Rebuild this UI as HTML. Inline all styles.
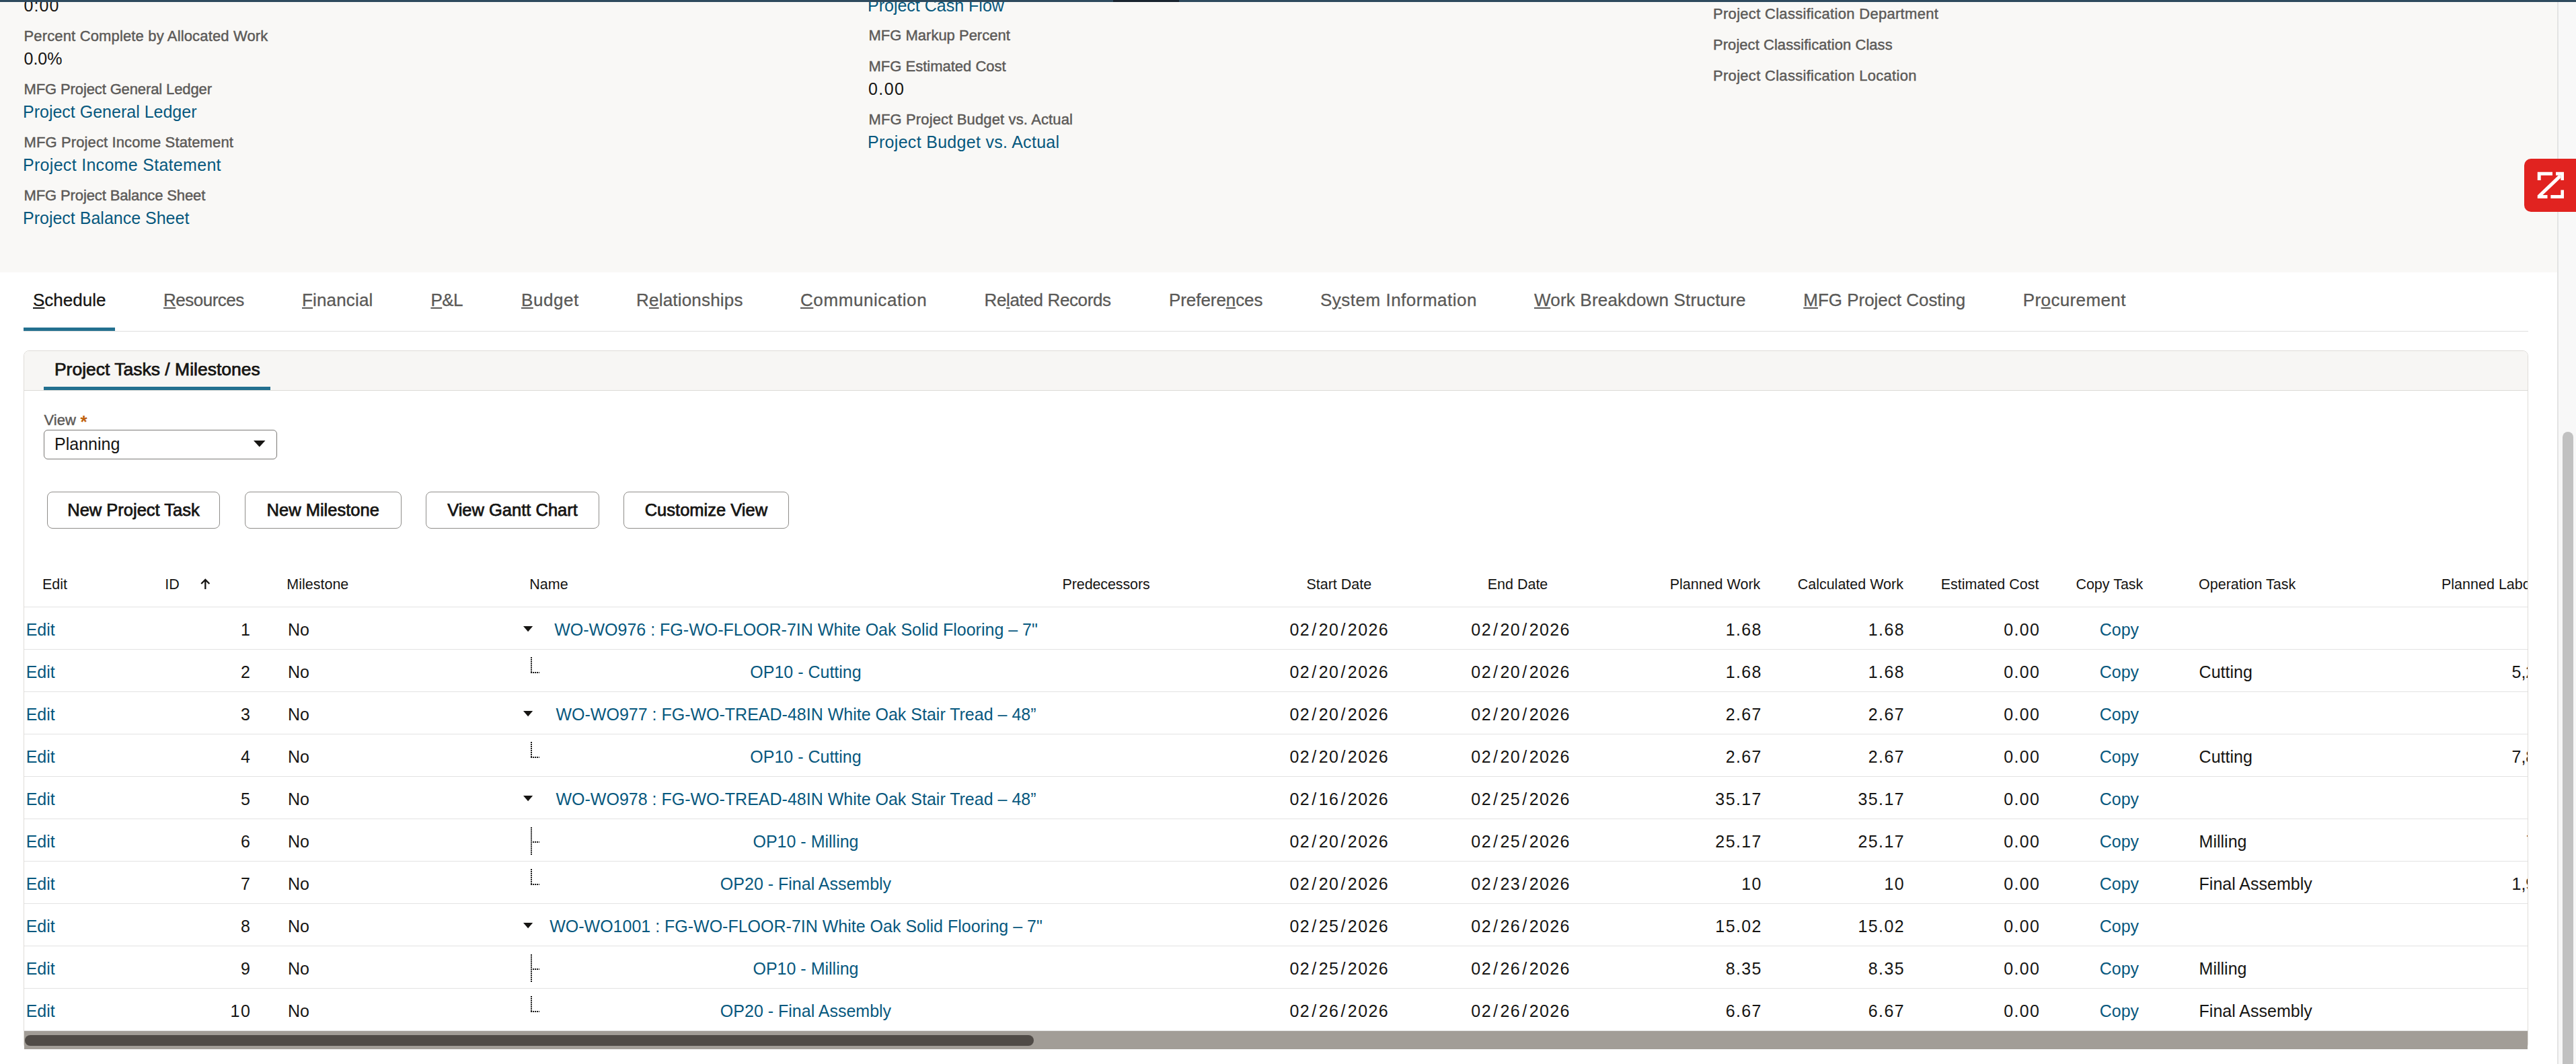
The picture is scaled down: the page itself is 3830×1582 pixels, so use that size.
<!DOCTYPE html><html><head><meta charset='utf-8'><style>
html,body{margin:0;padding:0;}
body{width:3830px;height:1582px;overflow:hidden;position:relative;background:#fff;font-family:"Liberation Sans",sans-serif;}
.t{position:absolute;white-space:nowrap;}
.r{position:absolute;}
.ab{position:absolute;}
.num{letter-spacing:1.4px;}
.sl{margin:0 2.1px;}
.sb{-webkit-text-stroke:0.45px currentColor;}
.sbt{-webkit-text-stroke:0.3px currentColor;}
.sb2{-webkit-text-stroke:0.75px currentColor;}
u{text-decoration:underline;text-decoration-thickness:2px;text-underline-offset:2px;}
.card{position:absolute;left:35px;top:521px;width:3722px;height:1037px;border:1px solid #dfdcd8;border-radius:8px;}
.sel{position:absolute;left:65.4px;top:638.5px;width:347px;height:44px;box-sizing:border-box;border:1.5px solid #7b7976;border-radius:6px;background:#fff;}
.btn{position:absolute;top:730.5px;height:55.2px;border:1.2px solid #8f8d8a;border-radius:8px;background:#fff;box-sizing:border-box;}
.dv{position:absolute;width:2px;background:repeating-linear-gradient(to bottom,#1a1a1a 0 1.6px,transparent 1.6px 3px);}
.dh{position:absolute;height:2px;background:repeating-linear-gradient(to right,#1a1a1a 0 1.6px,transparent 1.6px 3px);}

</style></head><body><div class='r' style='left:0px;top:0px;width:3802px;height:405px;background:#f9f8f6;'></div>
<div class='t num' style='top:-3.8px;font-size:25px;line-height:25px;color:#161513;left:35.5px;letter-spacing:1.1px'>0:00</div>
<div class='t sb' style='top:42.5px;font-size:22px;line-height:22px;color:#5c5a58;left:35.5px;letter-spacing:0.15px'>Percent Complete by Allocated Work</div>
<div class='t' style='top:74.5px;font-size:25px;line-height:25px;color:#161513;left:35.5px;'>0.0%</div>
<div class='t sb' style='top:121.5px;font-size:22px;line-height:22px;color:#5c5a58;left:35.5px;letter-spacing:-0.12px'>MFG Project General Ledger</div>
<div class='t' style='top:154.0px;font-size:25px;line-height:25px;color:#07587e;left:34.0px;'>Project General Ledger</div>
<div class='t sb' style='top:200.5px;font-size:22px;line-height:22px;color:#5c5a58;left:35.5px;letter-spacing:0.12px'>MFG Project Income Statement</div>
<div class='t' style='top:232.5px;font-size:25px;line-height:25px;color:#07587e;left:34.0px;letter-spacing:0.3px'>Project Income Statement</div>
<div class='t sb' style='top:279.5px;font-size:22px;line-height:22px;color:#5c5a58;left:35.5px;letter-spacing:-0.12px'>MFG Project Balance Sheet</div>
<div class='t' style='top:311.5px;font-size:25px;line-height:25px;color:#07587e;left:34.0px;'>Project Balance Sheet</div>
<div class='t' style='top:-4.5px;font-size:25px;line-height:25px;color:#07587e;left:1290.0px;'>Project Cash Flow</div>
<div class='t sb' style='top:42.0px;font-size:22px;line-height:22px;color:#5c5a58;left:1291.5px;'>MFG Markup Percent</div>
<div class='t sb' style='top:87.5px;font-size:22px;line-height:22px;color:#5c5a58;left:1291.5px;'>MFG Estimated Cost</div>
<div class='t num' style='top:119.5px;font-size:25px;line-height:25px;color:#161513;left:1291.0px;'>0.00</div>
<div class='t sb' style='top:166.5px;font-size:22px;line-height:22px;color:#5c5a58;left:1291.5px;letter-spacing:0.14px'>MFG Project Budget vs. Actual</div>
<div class='t' style='top:198.5px;font-size:25px;line-height:25px;color:#07587e;left:1290.0px;letter-spacing:0.3px'>Project Budget vs. Actual</div>
<div class='t sb' style='top:10.0px;font-size:22px;line-height:22px;color:#5c5a58;left:2547.0px;letter-spacing:0.3px'>Project Classification Department</div>
<div class='t sb' style='top:56.0px;font-size:22px;line-height:22px;color:#5c5a58;left:2547.0px;letter-spacing:0.05px'>Project Classification Class</div>
<div class='t sb' style='top:102.0px;font-size:22px;line-height:22px;color:#5c5a58;left:2547.0px;letter-spacing:0.3px'>Project Classification Location</div>
<div class='t sbt' style='top:432.5px;font-size:26px;line-height:26px;color:#161513;left:49.0px;letter-spacing:0px'><u>S</u>chedule</div>
<div class='t sbt' style='top:432.5px;font-size:26px;line-height:26px;color:#5a5957;left:243.0px;letter-spacing:-0.5px'><u>R</u>esources</div>
<div class='t sbt' style='top:432.5px;font-size:26px;line-height:26px;color:#5a5957;left:449.0px;letter-spacing:0.15px'><u>F</u>inancial</div>
<div class='t sbt' style='top:432.5px;font-size:26px;line-height:26px;color:#5a5957;left:640.4px;letter-spacing:-0.55px'><u>P</u>&amp;L</div>
<div class='t sbt' style='top:432.5px;font-size:26px;line-height:26px;color:#5a5957;left:775.0px;letter-spacing:0.54px'><u>B</u>udget</div>
<div class='t sbt' style='top:432.5px;font-size:26px;line-height:26px;color:#5a5957;left:946.0px;letter-spacing:0.2px'>R<u>e</u>lationships</div>
<div class='t sbt' style='top:432.5px;font-size:26px;line-height:26px;color:#5a5957;left:1190.0px;letter-spacing:0.58px'><u>C</u>ommunication</div>
<div class='t sbt' style='top:432.5px;font-size:26px;line-height:26px;color:#5a5957;left:1463.6px;letter-spacing:-0.37px'>Re<u>l</u>ated Records</div>
<div class='t sbt' style='top:432.5px;font-size:26px;line-height:26px;color:#5a5957;left:1738.0px;letter-spacing:-0.07px'>Prefere<u>n</u>ces</div>
<div class='t sbt' style='top:432.5px;font-size:26px;line-height:26px;color:#5a5957;left:1963.0px;letter-spacing:0.5px'>S<u>y</u>stem Information</div>
<div class='t sbt' style='top:432.5px;font-size:26px;line-height:26px;color:#5a5957;left:2281.0px;letter-spacing:0.19px'><u>W</u>ork Breakdown Structure</div>
<div class='t sbt' style='top:432.5px;font-size:26px;line-height:26px;color:#5a5957;left:2681.3px;letter-spacing:-0.02px'><u>M</u>FG Project Costing</div>
<div class='t sbt' style='top:432.5px;font-size:26px;line-height:26px;color:#5a5957;left:3007.8px;letter-spacing:0.37px'>Pr<u>o</u>curement</div>
<div class='r' style='left:35px;top:487px;width:136px;height:5px;background:#23708f;'></div>
<div class='r' style='left:35px;top:492px;width:3724px;height:1px;background:#dfdfdf;'></div>
<div class='card'></div>
<div class='r' style='left:36px;top:522px;width:3722px;height:58px;background:#f7f6f4;border-radius:7px 7px 0 0'></div>
<div class='r' style='left:36px;top:580px;width:3722px;height:1px;background:#dcdad6;'></div>
<div class='t sb2' style='top:536.0px;font-size:26.5px;line-height:26.5px;color:#161513;left:80.9px;'>Project Tasks / Milestones</div>
<div class='r' style='left:65px;top:575px;width:337px;height:5px;background:#23708f;'></div>
<div class='t sb' style='top:614.0px;font-size:22px;line-height:22px;color:#5c5a58;left:65.6px;'>View</div>
<div class='t' style='top:614.0px;font-size:26px;line-height:26px;color:#c0620e;font-weight:700;left:119.5px;'>*</div>
<div class='sel'></div>
<div class='t' style='top:648.0px;font-size:25px;line-height:25px;color:#161513;left:81.0px;'>Planning</div>
<svg class='ab' style='left:377px;top:655px' width='18' height='10'><path d='M0 0H17.5L8.75 9.5Z' fill='#161513'/></svg>
<div class='btn' style='left:69.6px;width:257.9px'></div>
<div class='t sb2' style='top:746.0px;font-size:25.5px;line-height:25.5px;color:#161513;left:-801.5px;width:2000px;text-align:center;'>New Project Task</div>
<div class='btn' style='left:364px;width:232.5px'></div>
<div class='t sb2' style='top:746.0px;font-size:25.5px;line-height:25.5px;color:#161513;left:-519.8px;width:2000px;text-align:center;'>New Milestone</div>
<div class='btn' style='left:633.3px;width:257.4000000000001px'></div>
<div class='t sb2' style='top:746.0px;font-size:25.5px;line-height:25.5px;color:#161513;left:-238.0px;width:2000px;text-align:center;'>View Gantt Chart</div>
<div class='btn' style='left:927.3px;width:245.29999999999995px'></div>
<div class='t sb2' style='top:746.0px;font-size:25.5px;line-height:25.5px;color:#161513;left:49.9px;width:2000px;text-align:center;'>Customize View</div>
<div class='t' style='top:858.5px;font-size:21.5px;line-height:21.5px;color:#161513;left:63.0px;'>Edit</div>
<div class='t' style='top:858.5px;font-size:21.5px;line-height:21.5px;color:#161513;left:245.3px;'>ID</div>
<svg class='ab' style='left:298px;top:860px' width='15' height='17'><path d='M7.3 1.5V16M1.2 8L7.3 1.9L13.4 8' stroke='#161513' stroke-width='2.3' fill='none'/></svg>
<div class='t' style='top:858.5px;font-size:21.5px;line-height:21.5px;color:#161513;left:426.3px;'>Milestone</div>
<div class='t' style='top:858.5px;font-size:21.5px;line-height:21.5px;color:#161513;left:787.3px;'>Name</div>
<div class='t' style='top:858.5px;font-size:21.5px;line-height:21.5px;color:#161513;left:1579.6px;letter-spacing:-0.12px'>Predecessors</div>
<div class='t' style='top:858.5px;font-size:21.5px;line-height:21.5px;color:#161513;left:990.8px;width:2000px;text-align:center;'>Start Date</div>
<div class='t' style='top:858.5px;font-size:21.5px;line-height:21.5px;color:#161513;left:1256.5px;width:2000px;text-align:center;'>End Date</div>
<div class='t' style='top:858.5px;font-size:21.5px;line-height:21.5px;color:#161513;left:1617.3px;width:1000px;text-align:right;'>Planned Work</div>
<div class='t' style='top:858.5px;font-size:21.5px;line-height:21.5px;color:#161513;left:1830.0px;width:1000px;text-align:right;'>Calculated Work</div>
<div class='t' style='top:858.5px;font-size:21.5px;line-height:21.5px;color:#161513;left:2031.5px;width:1000px;text-align:right;'>Estimated Cost</div>
<div class='t' style='top:858.5px;font-size:21.5px;line-height:21.5px;color:#161513;left:2136.4px;width:2000px;text-align:center;'>Copy Task</div>
<div class='t' style='top:858.5px;font-size:21.5px;line-height:21.5px;color:#161513;left:3269.0px;'>Operation Task</div>
<div class='r' style='left:36px;top:902px;width:3722px;height:1px;background:#e3e3e3;'></div>
<div class='r' style='left:36px;top:965px;width:3722px;height:1px;background:#e3e3e3;'></div>
<div class='t' style='top:924.2px;font-size:25px;line-height:25px;color:#07587e;left:38.7px;'>Edit</div>
<div class='t num' style='top:924.2px;font-size:25px;line-height:25px;color:#161513;left:-626.8px;width:1000px;text-align:right;'>1</div>
<div class='t' style='top:924.2px;font-size:25px;line-height:25px;color:#161513;left:428.0px;'>No</div>
<svg class='ab' style='left:778px;top:931.3px' width='15' height='9'><path d='M0 0H14.2L7.1 8.3Z' fill='#161513'/></svg>
<div class='t' style='top:924.2px;font-size:25px;line-height:25px;color:#07587e;left:183.5px;width:2000px;text-align:center;'>WO-WO976 : FG-WO-FLOOR-7IN White Oak Solid Flooring – 7&quot;</div>
<div class='t num' style='top:924.2px;font-size:25px;line-height:25px;color:#161513;left:991.3px;width:2000px;text-align:center;'>02<span class='sl'>/</span>20<span class='sl'>/</span>2026</div>
<div class='t num' style='top:924.2px;font-size:25px;line-height:25px;color:#161513;left:1261.1px;width:2000px;text-align:center;'>02<span class='sl'>/</span>20<span class='sl'>/</span>2026</div>
<div class='t num' style='top:924.2px;font-size:25px;line-height:25px;color:#161513;left:1619.9px;width:1000px;text-align:right;'>1.68</div>
<div class='t num' style='top:924.2px;font-size:25px;line-height:25px;color:#161513;left:1832.0px;width:1000px;text-align:right;'>1.68</div>
<div class='t num' style='top:924.2px;font-size:25px;line-height:25px;color:#161513;left:2033.4px;width:1000px;text-align:right;'>0.00</div>
<div class='t' style='top:924.2px;font-size:25px;line-height:25px;color:#07587e;left:2150.9px;width:2000px;text-align:center;'>Copy</div>
<div class='r' style='left:36px;top:1028px;width:3722px;height:1px;background:#e3e3e3;'></div>
<div class='t' style='top:987.1px;font-size:25px;line-height:25px;color:#07587e;left:38.7px;'>Edit</div>
<div class='t num' style='top:987.1px;font-size:25px;line-height:25px;color:#161513;left:-626.8px;width:1000px;text-align:right;'>2</div>
<div class='t' style='top:987.1px;font-size:25px;line-height:25px;color:#161513;left:428.0px;'>No</div>
<div class='dv' style='left:788.5px;top:977px;height:23px'></div><div class='dh' style='left:789px;top:998.5px;width:12.5px'></div>
<div class='t' style='top:987.1px;font-size:25px;line-height:25px;color:#07587e;left:198.0px;width:2000px;text-align:center;'>OP10 - Cutting</div>
<div class='t num' style='top:987.1px;font-size:25px;line-height:25px;color:#161513;left:991.3px;width:2000px;text-align:center;'>02<span class='sl'>/</span>20<span class='sl'>/</span>2026</div>
<div class='t num' style='top:987.1px;font-size:25px;line-height:25px;color:#161513;left:1261.1px;width:2000px;text-align:center;'>02<span class='sl'>/</span>20<span class='sl'>/</span>2026</div>
<div class='t num' style='top:987.1px;font-size:25px;line-height:25px;color:#161513;left:1619.9px;width:1000px;text-align:right;'>1.68</div>
<div class='t num' style='top:987.1px;font-size:25px;line-height:25px;color:#161513;left:1832.0px;width:1000px;text-align:right;'>1.68</div>
<div class='t num' style='top:987.1px;font-size:25px;line-height:25px;color:#161513;left:2033.4px;width:1000px;text-align:right;'>0.00</div>
<div class='t' style='top:987.1px;font-size:25px;line-height:25px;color:#07587e;left:2150.9px;width:2000px;text-align:center;'>Copy</div>
<div class='t' style='top:987.1px;font-size:25px;line-height:25px;color:#161513;left:3269.6px;'>Cutting</div>
<div class='r' style='left:36px;top:1091px;width:3722px;height:1px;background:#e3e3e3;'></div>
<div class='t' style='top:1050.1px;font-size:25px;line-height:25px;color:#07587e;left:38.7px;'>Edit</div>
<div class='t num' style='top:1050.1px;font-size:25px;line-height:25px;color:#161513;left:-626.8px;width:1000px;text-align:right;'>3</div>
<div class='t' style='top:1050.1px;font-size:25px;line-height:25px;color:#161513;left:428.0px;'>No</div>
<svg class='ab' style='left:778px;top:1057.3px' width='15' height='9'><path d='M0 0H14.2L7.1 8.3Z' fill='#161513'/></svg>
<div class='t' style='top:1050.1px;font-size:25px;line-height:25px;color:#07587e;left:183.5px;width:2000px;text-align:center;'>WO-WO977 : FG-WO-TREAD-48IN White Oak Stair Tread – 48”</div>
<div class='t num' style='top:1050.1px;font-size:25px;line-height:25px;color:#161513;left:991.3px;width:2000px;text-align:center;'>02<span class='sl'>/</span>20<span class='sl'>/</span>2026</div>
<div class='t num' style='top:1050.1px;font-size:25px;line-height:25px;color:#161513;left:1261.1px;width:2000px;text-align:center;'>02<span class='sl'>/</span>20<span class='sl'>/</span>2026</div>
<div class='t num' style='top:1050.1px;font-size:25px;line-height:25px;color:#161513;left:1619.9px;width:1000px;text-align:right;'>2.67</div>
<div class='t num' style='top:1050.1px;font-size:25px;line-height:25px;color:#161513;left:1832.0px;width:1000px;text-align:right;'>2.67</div>
<div class='t num' style='top:1050.1px;font-size:25px;line-height:25px;color:#161513;left:2033.4px;width:1000px;text-align:right;'>0.00</div>
<div class='t' style='top:1050.1px;font-size:25px;line-height:25px;color:#07587e;left:2150.9px;width:2000px;text-align:center;'>Copy</div>
<div class='r' style='left:36px;top:1154px;width:3722px;height:1px;background:#e3e3e3;'></div>
<div class='t' style='top:1113.0px;font-size:25px;line-height:25px;color:#07587e;left:38.7px;'>Edit</div>
<div class='t num' style='top:1113.0px;font-size:25px;line-height:25px;color:#161513;left:-626.8px;width:1000px;text-align:right;'>4</div>
<div class='t' style='top:1113.0px;font-size:25px;line-height:25px;color:#161513;left:428.0px;'>No</div>
<div class='dv' style='left:788.5px;top:1103px;height:23px'></div><div class='dh' style='left:789px;top:1124.5px;width:12.5px'></div>
<div class='t' style='top:1113.0px;font-size:25px;line-height:25px;color:#07587e;left:198.0px;width:2000px;text-align:center;'>OP10 - Cutting</div>
<div class='t num' style='top:1113.0px;font-size:25px;line-height:25px;color:#161513;left:991.3px;width:2000px;text-align:center;'>02<span class='sl'>/</span>20<span class='sl'>/</span>2026</div>
<div class='t num' style='top:1113.0px;font-size:25px;line-height:25px;color:#161513;left:1261.1px;width:2000px;text-align:center;'>02<span class='sl'>/</span>20<span class='sl'>/</span>2026</div>
<div class='t num' style='top:1113.0px;font-size:25px;line-height:25px;color:#161513;left:1619.9px;width:1000px;text-align:right;'>2.67</div>
<div class='t num' style='top:1113.0px;font-size:25px;line-height:25px;color:#161513;left:1832.0px;width:1000px;text-align:right;'>2.67</div>
<div class='t num' style='top:1113.0px;font-size:25px;line-height:25px;color:#161513;left:2033.4px;width:1000px;text-align:right;'>0.00</div>
<div class='t' style='top:1113.0px;font-size:25px;line-height:25px;color:#07587e;left:2150.9px;width:2000px;text-align:center;'>Copy</div>
<div class='t' style='top:1113.0px;font-size:25px;line-height:25px;color:#161513;left:3269.6px;'>Cutting</div>
<div class='r' style='left:36px;top:1217px;width:3722px;height:1px;background:#e3e3e3;'></div>
<div class='t' style='top:1175.9px;font-size:25px;line-height:25px;color:#07587e;left:38.7px;'>Edit</div>
<div class='t num' style='top:1175.9px;font-size:25px;line-height:25px;color:#161513;left:-626.8px;width:1000px;text-align:right;'>5</div>
<div class='t' style='top:1175.9px;font-size:25px;line-height:25px;color:#161513;left:428.0px;'>No</div>
<svg class='ab' style='left:778px;top:1183.3px' width='15' height='9'><path d='M0 0H14.2L7.1 8.3Z' fill='#161513'/></svg>
<div class='t' style='top:1175.9px;font-size:25px;line-height:25px;color:#07587e;left:183.5px;width:2000px;text-align:center;'>WO-WO978 : FG-WO-TREAD-48IN White Oak Stair Tread – 48”</div>
<div class='t num' style='top:1175.9px;font-size:25px;line-height:25px;color:#161513;left:991.3px;width:2000px;text-align:center;'>02<span class='sl'>/</span>16<span class='sl'>/</span>2026</div>
<div class='t num' style='top:1175.9px;font-size:25px;line-height:25px;color:#161513;left:1261.1px;width:2000px;text-align:center;'>02<span class='sl'>/</span>25<span class='sl'>/</span>2026</div>
<div class='t num' style='top:1175.9px;font-size:25px;line-height:25px;color:#161513;left:1619.9px;width:1000px;text-align:right;'>35.17</div>
<div class='t num' style='top:1175.9px;font-size:25px;line-height:25px;color:#161513;left:1832.0px;width:1000px;text-align:right;'>35.17</div>
<div class='t num' style='top:1175.9px;font-size:25px;line-height:25px;color:#161513;left:2033.4px;width:1000px;text-align:right;'>0.00</div>
<div class='t' style='top:1175.9px;font-size:25px;line-height:25px;color:#07587e;left:2150.9px;width:2000px;text-align:center;'>Copy</div>
<div class='r' style='left:36px;top:1280px;width:3722px;height:1px;background:#e3e3e3;'></div>
<div class='t' style='top:1238.8px;font-size:25px;line-height:25px;color:#07587e;left:38.7px;'>Edit</div>
<div class='t num' style='top:1238.8px;font-size:25px;line-height:25px;color:#161513;left:-626.8px;width:1000px;text-align:right;'>6</div>
<div class='t' style='top:1238.8px;font-size:25px;line-height:25px;color:#161513;left:428.0px;'>No</div>
<div class='dv' style='left:788.5px;top:1230px;height:42px'></div><div class='dh' style='left:789px;top:1250.5px;width:12.5px'></div>
<div class='t' style='top:1238.8px;font-size:25px;line-height:25px;color:#07587e;left:198.0px;width:2000px;text-align:center;'>OP10 - Milling</div>
<div class='t num' style='top:1238.8px;font-size:25px;line-height:25px;color:#161513;left:991.3px;width:2000px;text-align:center;'>02<span class='sl'>/</span>20<span class='sl'>/</span>2026</div>
<div class='t num' style='top:1238.8px;font-size:25px;line-height:25px;color:#161513;left:1261.1px;width:2000px;text-align:center;'>02<span class='sl'>/</span>25<span class='sl'>/</span>2026</div>
<div class='t num' style='top:1238.8px;font-size:25px;line-height:25px;color:#161513;left:1619.9px;width:1000px;text-align:right;'>25.17</div>
<div class='t num' style='top:1238.8px;font-size:25px;line-height:25px;color:#161513;left:1832.0px;width:1000px;text-align:right;'>25.17</div>
<div class='t num' style='top:1238.8px;font-size:25px;line-height:25px;color:#161513;left:2033.4px;width:1000px;text-align:right;'>0.00</div>
<div class='t' style='top:1238.8px;font-size:25px;line-height:25px;color:#07587e;left:2150.9px;width:2000px;text-align:center;'>Copy</div>
<div class='t' style='top:1238.8px;font-size:25px;line-height:25px;color:#161513;left:3269.6px;'>Milling</div>
<div class='r' style='left:36px;top:1343px;width:3722px;height:1px;background:#e3e3e3;'></div>
<div class='t' style='top:1301.8px;font-size:25px;line-height:25px;color:#07587e;left:38.7px;'>Edit</div>
<div class='t num' style='top:1301.8px;font-size:25px;line-height:25px;color:#161513;left:-626.8px;width:1000px;text-align:right;'>7</div>
<div class='t' style='top:1301.8px;font-size:25px;line-height:25px;color:#161513;left:428.0px;'>No</div>
<div class='dv' style='left:788.5px;top:1292px;height:23px'></div><div class='dh' style='left:789px;top:1313.5px;width:12.5px'></div>
<div class='t' style='top:1301.8px;font-size:25px;line-height:25px;color:#07587e;left:198.0px;width:2000px;text-align:center;'>OP20 - Final Assembly</div>
<div class='t num' style='top:1301.8px;font-size:25px;line-height:25px;color:#161513;left:991.3px;width:2000px;text-align:center;'>02<span class='sl'>/</span>20<span class='sl'>/</span>2026</div>
<div class='t num' style='top:1301.8px;font-size:25px;line-height:25px;color:#161513;left:1261.1px;width:2000px;text-align:center;'>02<span class='sl'>/</span>23<span class='sl'>/</span>2026</div>
<div class='t num' style='top:1301.8px;font-size:25px;line-height:25px;color:#161513;left:1619.9px;width:1000px;text-align:right;'>10</div>
<div class='t num' style='top:1301.8px;font-size:25px;line-height:25px;color:#161513;left:1832.0px;width:1000px;text-align:right;'>10</div>
<div class='t num' style='top:1301.8px;font-size:25px;line-height:25px;color:#161513;left:2033.4px;width:1000px;text-align:right;'>0.00</div>
<div class='t' style='top:1301.8px;font-size:25px;line-height:25px;color:#07587e;left:2150.9px;width:2000px;text-align:center;'>Copy</div>
<div class='t' style='top:1301.8px;font-size:25px;line-height:25px;color:#161513;left:3269.6px;'>Final Assembly</div>
<div class='r' style='left:36px;top:1406px;width:3722px;height:1px;background:#e3e3e3;'></div>
<div class='t' style='top:1364.7px;font-size:25px;line-height:25px;color:#07587e;left:38.7px;'>Edit</div>
<div class='t num' style='top:1364.7px;font-size:25px;line-height:25px;color:#161513;left:-626.8px;width:1000px;text-align:right;'>8</div>
<div class='t' style='top:1364.7px;font-size:25px;line-height:25px;color:#161513;left:428.0px;'>No</div>
<svg class='ab' style='left:778px;top:1372.3px' width='15' height='9'><path d='M0 0H14.2L7.1 8.3Z' fill='#161513'/></svg>
<div class='t' style='top:1364.7px;font-size:25px;line-height:25px;color:#07587e;left:183.5px;width:2000px;text-align:center;'>WO-WO1001 : FG-WO-FLOOR-7IN White Oak Solid Flooring – 7&quot;</div>
<div class='t num' style='top:1364.7px;font-size:25px;line-height:25px;color:#161513;left:991.3px;width:2000px;text-align:center;'>02<span class='sl'>/</span>25<span class='sl'>/</span>2026</div>
<div class='t num' style='top:1364.7px;font-size:25px;line-height:25px;color:#161513;left:1261.1px;width:2000px;text-align:center;'>02<span class='sl'>/</span>26<span class='sl'>/</span>2026</div>
<div class='t num' style='top:1364.7px;font-size:25px;line-height:25px;color:#161513;left:1619.9px;width:1000px;text-align:right;'>15.02</div>
<div class='t num' style='top:1364.7px;font-size:25px;line-height:25px;color:#161513;left:1832.0px;width:1000px;text-align:right;'>15.02</div>
<div class='t num' style='top:1364.7px;font-size:25px;line-height:25px;color:#161513;left:2033.4px;width:1000px;text-align:right;'>0.00</div>
<div class='t' style='top:1364.7px;font-size:25px;line-height:25px;color:#07587e;left:2150.9px;width:2000px;text-align:center;'>Copy</div>
<div class='r' style='left:36px;top:1469px;width:3722px;height:1px;background:#e3e3e3;'></div>
<div class='t' style='top:1427.6px;font-size:25px;line-height:25px;color:#07587e;left:38.7px;'>Edit</div>
<div class='t num' style='top:1427.6px;font-size:25px;line-height:25px;color:#161513;left:-626.8px;width:1000px;text-align:right;'>9</div>
<div class='t' style='top:1427.6px;font-size:25px;line-height:25px;color:#161513;left:428.0px;'>No</div>
<div class='dv' style='left:788.5px;top:1419px;height:42px'></div><div class='dh' style='left:789px;top:1439.5px;width:12.5px'></div>
<div class='t' style='top:1427.6px;font-size:25px;line-height:25px;color:#07587e;left:198.0px;width:2000px;text-align:center;'>OP10 - Milling</div>
<div class='t num' style='top:1427.6px;font-size:25px;line-height:25px;color:#161513;left:991.3px;width:2000px;text-align:center;'>02<span class='sl'>/</span>25<span class='sl'>/</span>2026</div>
<div class='t num' style='top:1427.6px;font-size:25px;line-height:25px;color:#161513;left:1261.1px;width:2000px;text-align:center;'>02<span class='sl'>/</span>26<span class='sl'>/</span>2026</div>
<div class='t num' style='top:1427.6px;font-size:25px;line-height:25px;color:#161513;left:1619.9px;width:1000px;text-align:right;'>8.35</div>
<div class='t num' style='top:1427.6px;font-size:25px;line-height:25px;color:#161513;left:1832.0px;width:1000px;text-align:right;'>8.35</div>
<div class='t num' style='top:1427.6px;font-size:25px;line-height:25px;color:#161513;left:2033.4px;width:1000px;text-align:right;'>0.00</div>
<div class='t' style='top:1427.6px;font-size:25px;line-height:25px;color:#07587e;left:2150.9px;width:2000px;text-align:center;'>Copy</div>
<div class='t' style='top:1427.6px;font-size:25px;line-height:25px;color:#161513;left:3269.6px;'>Milling</div>
<div class='r' style='left:36px;top:1532px;width:3722px;height:1px;background:#e3e3e3;'></div>
<div class='t' style='top:1490.6px;font-size:25px;line-height:25px;color:#07587e;left:38.7px;'>Edit</div>
<div class='t num' style='top:1490.6px;font-size:25px;line-height:25px;color:#161513;left:-626.8px;width:1000px;text-align:right;'>10</div>
<div class='t' style='top:1490.6px;font-size:25px;line-height:25px;color:#161513;left:428.0px;'>No</div>
<div class='dv' style='left:788.5px;top:1481px;height:23px'></div><div class='dh' style='left:789px;top:1502.5px;width:12.5px'></div>
<div class='t' style='top:1490.6px;font-size:25px;line-height:25px;color:#07587e;left:198.0px;width:2000px;text-align:center;'>OP20 - Final Assembly</div>
<div class='t num' style='top:1490.6px;font-size:25px;line-height:25px;color:#161513;left:991.3px;width:2000px;text-align:center;'>02<span class='sl'>/</span>26<span class='sl'>/</span>2026</div>
<div class='t num' style='top:1490.6px;font-size:25px;line-height:25px;color:#161513;left:1261.1px;width:2000px;text-align:center;'>02<span class='sl'>/</span>26<span class='sl'>/</span>2026</div>
<div class='t num' style='top:1490.6px;font-size:25px;line-height:25px;color:#161513;left:1619.9px;width:1000px;text-align:right;'>6.67</div>
<div class='t num' style='top:1490.6px;font-size:25px;line-height:25px;color:#161513;left:1832.0px;width:1000px;text-align:right;'>6.67</div>
<div class='t num' style='top:1490.6px;font-size:25px;line-height:25px;color:#161513;left:2033.4px;width:1000px;text-align:right;'>0.00</div>
<div class='t' style='top:1490.6px;font-size:25px;line-height:25px;color:#07587e;left:2150.9px;width:2000px;text-align:center;'>Copy</div>
<div class='t' style='top:1490.6px;font-size:25px;line-height:25px;color:#161513;left:3269.6px;'>Final Assembly</div>
<div style='position:absolute;left:0;top:0;width:3758px;height:1582px;overflow:hidden'><div class='t' style='top:858.5px;font-size:21.5px;line-height:21.5px;color:#161513;left:3630.0px;'>Planned Labor</div><div class='t' style='top:987.1px;font-size:25px;line-height:25px;color:#161513;left:3734.5px;'>5,200.00</div><div class='t' style='top:1113.0px;font-size:25px;line-height:25px;color:#161513;left:3734.5px;'>7,800.00</div><div class='t' style='top:1238.8px;font-size:25px;line-height:25px;color:#161513;left:3756.0px;'>700.00</div><div class='t' style='top:1301.8px;font-size:25px;line-height:25px;color:#161513;left:3734.5px;'>1,900.00</div></div>
<div class='r' style='left:36px;top:1533px;width:3722px;height:27px;background:#a29d97;'></div>
<div class='r' style='left:37px;top:1539px;width:1500px;height:16px;background:#504b47;border-radius:8px'></div>
<div class='r' style='left:3802px;top:0px;width:2px;height:1582px;background:#e3e3e3;'></div>
<div class='r' style='left:3804px;top:0px;width:26px;height:1582px;background:#f8f8f8;'></div>
<div class='r' style='left:3810px;top:642px;width:16px;height:958px;background:#c1c1c1;border-radius:8px'></div>
<div class='r' style='left:0px;top:0px;width:3830px;height:3px;background:#2e4a5e;'></div>
<div class='r' style='left:1655px;top:0px;width:98px;height:3px;background:#19242f;'></div>
<div class='r' style='left:3753px;top:236px;width:90px;height:79px;background:#e12320;border-radius:10px'></div>
<svg class='ab' style='left:3765px;top:248px' width='55' height='55' viewBox='0 0 55 55'><g fill='#fff'><path d='M7.75 7.75H30V12.7H12.7V19.9H7.75Z'/><path d='M35.1 7.75H47V19.9H42.4V12.7H35.1Z'/><path d='M7.75 42.4L38.8 12.7H42.4V16.5L15.5 41.9H22.5V47H7.75Z'/><path d='M27.4 41.9H42.4V34.6H47V47H27.4Z'/></g></svg></body></html>
